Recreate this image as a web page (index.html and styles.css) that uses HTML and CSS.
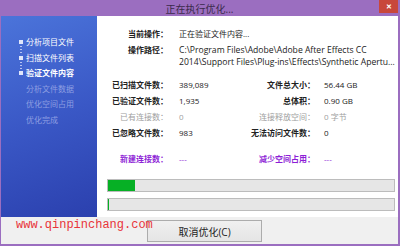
FILE: index.html
```html
<!DOCTYPE html>
<html>
<head>
  <title>正在执行优化...</title>
  <link rel="stylesheet" href="styles.css">
</head>
<body>
  <div class="window">
    <div class="title-bar">
      <span class="title">正在执行优化...</span>
      <span class="close">✕</span>
    </div>

    <div class="main">
      <!-- 步骤列表 -->
      <ul class="steps">
        <li class="done"><span class="dot"></span>分析项目文件</li>
        <li class="done"><span class="dot"></span>扫描文件列表</li>
        <li class="current"><span class="dot"></span>验证文件内容</li>
        <li>分析文件数据</li>
        <li>优化空间占用</li>
        <li>优化完成</li>
      </ul>

      <div class="panel">
        <div class="info">
          <div class="label">当前操作：</div>
          <div class="value">正在验证文件内容...</div>
          <div class="label">操作路径：</div>
          <div class="value path">C:\Program Files\Adobe\Adobe After Effects CC 2014\Support Files\Plug-ins\Effects\Synthetic Apertu...</div>
        </div>

        <div class="stats">
          <div class="label">已扫描文件数：</div>
          <div class="value">389,089</div>
          <div class="label">文件总大小：</div>
          <div class="value">56.44 GB</div>

          <div class="label">已验证文件数：</div>
          <div class="value">1,935</div>
          <div class="label">总体积：</div>
          <div class="value">0.90 GB</div>

          <div class="label muted">已有连接数：</div>
          <div class="value muted">0</div>
          <div class="label muted">连接释放空间：</div>
          <div class="value muted">0 字节</div>

          <div class="label">已忽略文件数：</div>
          <div class="value">983</div>
          <div class="label">无法访问文件数：</div>
          <div class="value">0</div>
        </div>

        <div class="stats extra">
          <div class="label">新建连接数：</div>
          <div class="value">---</div>
          <div class="label">减少空间占用：</div>
          <div class="value">---</div>
        </div>

        <div class="bar"><div class="fill" style="width: 27px"></div></div>
        <div class="bar"><div class="fill" style="width: 1px"></div></div>
      </div>
    </div>

    <div class="footer">
      <button class="button">取消优化(C)</button>
      <span class="watermark">www.qinpinchang.com</span>
    </div>
  </div>
</body>
</html>
```

FILE: styles.css
```css
/* 窗口 */
body {
  margin: 0;
  font-family: "Open Sans", "Noto Sans CJK SC", sans-serif;
  font-size: 8px;
}

.window {
  width: 400px;
  height: 246px;
  box-sizing: border-box;
  background-color: #9b6ec0;
  padding: 0 2px 2px 1px;
  display: flex;
  flex-direction: column;
}

.title-bar {
  height: 16px;
  display: flex;
  align-items: center;
  justify-content: center;
  position: relative;
}

.title {
  font-size: 10px;
  color: #3a2a4a;
}

.close {
  position: absolute;
  top: 0;
  right: 0;
  width: 19px;
  height: 13px;
  background-color: #c8473b;
  color: #fff;
  font-size: 7px;
  font-weight: bold;
  display: flex;
  align-items: center;
  justify-content: center;
}

.main {
  height: 201px;
  display: flex;
}

/* 左侧步骤 */
.steps {
  width: 96px;
  margin: 0;
  padding: 18px 0 0 17px;
  box-sizing: border-box;
  list-style: none;
  background: linear-gradient(160deg, #4b74da 0%, #3a58c6 50%, #2b40ae 100%);
  color: #8e9fe2;
  font-size: 8px;
  line-height: 15.6px;
}

.steps li {
  display: flex;
  align-items: center;
  padding-left: 8px;
  position: relative;
}

.steps .dot {
  position: absolute;
  left: 1px;
  top: 6px;
  width: 4px;
  height: 4px;
  background-color: #dfe6fb;
}

.steps .done .dot::after {
  content: "";
  position: absolute;
  left: 1px;
  top: 6px;
  width: 2px;
  height: 7px;
  background: repeating-linear-gradient(#b7c3f2 0 1px, transparent 1px 3px);
}

.steps .done {
  color: #fff;
}

.steps .current {
  color: #fff;
  font-weight: bold;
}

/* 右侧面板 */
.panel {
  flex: 1;
  background-color: #fff;
  padding: 12px 3px 0 10px;
  color: #222;
}

.info {
  display: grid;
  grid-template-columns: 61px 1fr;
  column-gap: 11px;
  row-gap: 4px;
  line-height: 12px;
}

.label {
  text-align: right;
  font-weight: bold;
  white-space: nowrap;
}

.value {
  white-space: nowrap;
}

.info .value {
  white-space: normal;
}

.info .path {
  font-size: 8.6px;
}

.stats {
  display: grid;
  grid-template-columns: 61px 60px 65px 1fr;
  column-gap: 11px;
  row-gap: 4px;
  line-height: 12px;
  margin-top: 11px;
}

.stats .label:nth-child(4n+3) {
  margin-left: -11px;
}

.stats .value:nth-child(4n) {
  margin-left: -2px;
}

.muted {
  color: #a0a0a0;
  font-weight: normal;
}

.extra {
  margin-top: 14px;
  color: #8e1fd6;
}

.bar {
  height: 13px;
  box-sizing: border-box;
  border: 1px solid #bcbcbc;
  background-color: #e6e6e6;
  margin-top: 14px;
}

.bar + .bar {
  margin-top: 6px;
}

.fill {
  height: 100%;
  background-color: #06b025;
}

/* 底部 */
.footer {
  flex: 1;
  background-color: #f0f0f0;
  padding: 3px 0 0 146px;
  position: relative;
}

.button {
  width: 115px;
  height: 22px;
  border: 1px solid #acacac;
  background: linear-gradient(#f0f0f0, #e5e5e5);
  font-family: "Open Sans", "Noto Sans CJK SC", sans-serif;
  font-size: 10px;
  color: #222;
  padding: 0;
}

.watermark {
  position: absolute;
  left: 15px;
  top: 1px;
  font-family: "Liberation Mono", monospace;
  font-size: 12px;
  color: #e8343a;
}
```
